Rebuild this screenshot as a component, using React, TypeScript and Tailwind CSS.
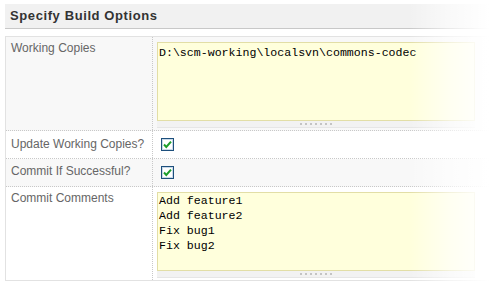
import React from "react";

function Check() {
  return (
    <svg width="13" height="13" viewBox="0 0 13 13" className="block">
      <rect x="0.5" y="0.5" width="12" height="12" fill="#ffffff" stroke="#1d4f7c" />
      <rect x="1.5" y="1.5" width="10" height="10" fill="none" stroke="#c9d9e8" />
      <path d="M3 6.5 L5.3 9 L10 3.6" fill="none" stroke="#1e9e2c" strokeWidth="2" />
    </svg>
  );
}

function Grip() {
  return (
    <div className="flex h-[7px] w-[318px] items-center justify-center gap-[1px] border-b border-[#e6e6e6] bg-[#f2f2f2]">
      {[0, 1, 2, 3, 4, 5, 6].map((i) => (
        <span key={i} className="mx-[1px] h-[2px] w-[2px] bg-[#c4c4c4]" />
      ))}
    </div>
  );
}

const mono = "font-['Liberation_Mono','DejaVu_Sans_Mono',monospace] text-[11.6px] leading-[15px] text-black";

export default function App() {
  return (
    <main className="relative h-[289px] w-[489px] overflow-hidden bg-white pt-[4px] font-['Liberation_Sans',Arial,sans-serif]">
      <div className="ml-[5px] flex h-[25px] items-center border-b border-[#c8c8c8] bg-[#f1f1f1] pl-[5px]">
        <h1 className="text-[13px] font-bold tracking-[0.6px] text-[#333]">Specify Build Options</h1>
      </div>

      <div className="ml-[5px] mt-[7px] border-y border-l border-[#e2e2e2]">
        <div className="flex h-[94px] border-b border-dotted border-[#c8c8c8] bg-[#f8f8f8]">
          <div className="w-[147px] shrink-0 border-r border-dotted border-[#c8c8c8] pl-[5px] pt-[4px] text-[12px] leading-[14px] text-[#666]">
            Working Copies
          </div>
          <div className="pl-[4px] pt-[5px]">
            <div className={`h-[79px] w-[318px] border border-[#e2dea6] bg-[#ffffdc] px-[1px] pt-[2px] ${mono}`}>
              D:\scm-working\localsvn\commons-codec
            </div>
            <Grip />
          </div>
        </div>

        <div className="flex h-[28px] border-b border-dotted border-[#c8c8c8] bg-white">
          <div className="w-[147px] shrink-0 border-r border-dotted border-[#c8c8c8] pl-[5px] pt-[6px] text-[12px] leading-[14px] text-[#666]">
            Update Working Copies?
          </div>
          <div className="pl-[8px] pt-[7px]">
            <Check />
          </div>
        </div>

        <div className="flex h-[28px] border-b border-dotted border-[#c8c8c8] bg-[#f8f8f8]">
          <div className="w-[147px] shrink-0 border-r border-dotted border-[#c8c8c8] pl-[5px] pt-[5px] text-[12px] leading-[14px] text-[#666]">
            Commit If Successful?
          </div>
          <div className="pl-[8px] pt-[7px]">
            <Check />
          </div>
        </div>

        <div className="flex h-[93px] bg-white">
          <div className="w-[147px] shrink-0 border-r border-dotted border-[#c8c8c8] pl-[5px] pt-[4px] text-[12px] leading-[14px] text-[#666]">
            Commit Comments
          </div>
          <div className="pl-[4px] pt-[5px]">
            <div className={`h-[79px] w-[318px] whitespace-pre border border-[#e2dea6] bg-[#ffffdc] px-[1px] pt-0 ${mono}`}>
              {"Add feature1\nAdd feature2\nFix bug1\nFix bug2"}
            </div>
            <Grip />
          </div>
        </div>
      </div>

      <div className="pointer-events-none absolute bottom-0 right-0 top-0 w-[80px] bg-gradient-to-r from-white/0 via-white/60 to-white" />
    </main>
  );
}
